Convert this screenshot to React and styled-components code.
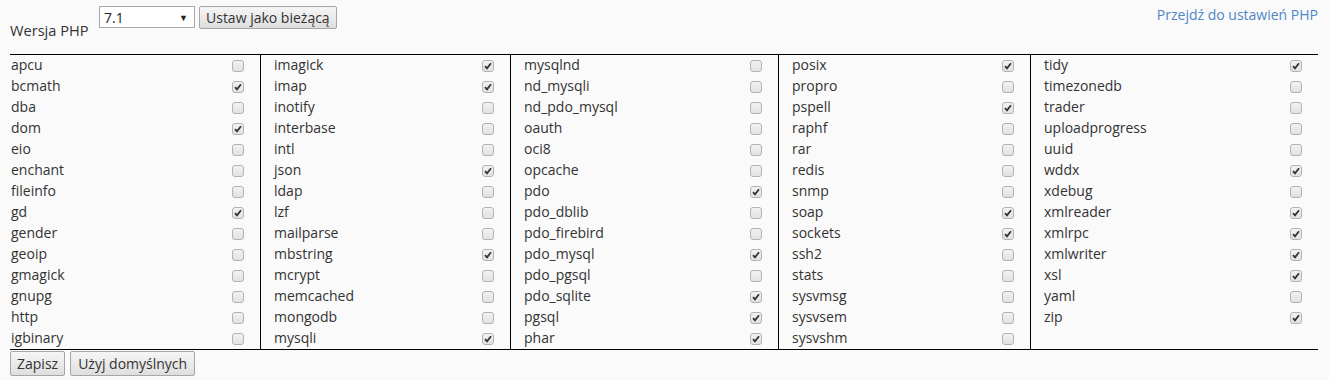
import React from "react";
import styled, { createGlobalStyle } from "styled-components";

const Global = createGlobalStyle`
  html, body { margin: 0; padding: 0; background: #fafafa; }
  body { font-family: "Open Sans", "Liberation Sans", sans-serif; font-size: 14px; color: #333; }
`;

const Page = styled.div`
  padding: 6px 11px 0 10px;
`;

const TopBar = styled.div`
  display: flex;
  align-items: flex-start;
  height: 48px;
`;

const Label = styled.span`
  margin-top: 14px;
  line-height: 20px;
  width: 89px;
  font-size: 14.6px;
  color: #333;
`;

const SelectBox = styled.div`
  box-sizing: border-box;
  width: 96px;
  height: 22px;
  border: 1px solid #a9a9a9;
  background: #fff;
  display: flex;
  align-items: center;
  justify-content: space-between;
  padding: 0 6px 0 4px;
  font-size: 14px;
  color: #222;
`;

const Arrow = styled.span`
  font-size: 9px;
  color: #222;
`;

const Button = styled.button`
  box-sizing: border-box;
  height: ${(p) => p.$h || 23}px;
  padding: 0 ${(p) => p.$px || 6}px;
  margin-left: ${(p) => p.$ml || 0}px;
  font-family: "Open Sans", "Liberation Sans", sans-serif;
  font-size: 14px;
  color: #333;
  border: 1px solid #a6a6a6;
  border-radius: 2px;
  background: linear-gradient(#f6f6f6, #dedede);
  line-height: 1;
`;

const Link = styled.a`
  margin-left: auto;
  color: #4f86c6;
  text-decoration: none;
  line-height: 20px;
  margin-top: -1px;
`;

const Table = styled.div`
  display: grid;
  grid-template-columns: 250px 250px 268px 252px 288px;
  border-top: 1px solid #000;
  border-bottom: 1px solid #000;
  width: 1308px;
`;

const Column = styled.div`
  display: flex;
  flex-direction: column;
  border-left: ${(p) => (p.$first ? "none" : "1px solid #000")};
  padding-left: ${(p) => (p.$first ? 1 : 13)}px;
  padding-right: 16px;
`;

const Row = styled.div`
  height: 21px;
  display: flex;
  align-items: center;
  justify-content: space-between;
`;

const Name = styled.span`
  color: #333;
  line-height: 19px;
  padding-bottom: 2px;
`;

const Box = styled.span`
  box-sizing: border-box;
  width: 12px;
  height: 12px;
  border: 1px solid #b3b3b3;
  border-radius: 3px;
  background: linear-gradient(#f2f2f2, #e2e2e2);
  display: flex;
  align-items: center;
  justify-content: center;
`;

const Footer = styled.div`
  display: flex;
  gap: 5px;
  padding-top: 1px;
`;

const Check = () => (
  <svg width="8" height="8" viewBox="0 0 8 8">
    <path d="M1 4.2 L3 6.3 L7 1.2" fill="none" stroke="#333" strokeWidth="1.8" />
  </svg>
);

const columns = [
  [["apcu",0],["bcmath",1],["dba",0],["dom",1],["eio",0],["enchant",0],["fileinfo",0],["gd",1],["gender",0],["geoip",0],["gmagick",0],["gnupg",0],["http",0],["igbinary",0]],
  [["imagick",1],["imap",1],["inotify",0],["interbase",0],["intl",0],["json",1],["ldap",0],["lzf",0],["mailparse",0],["mbstring",1],["mcrypt",0],["memcached",0],["mongodb",0],["mysqli",1]],
  [["mysqlnd",0],["nd_mysqli",0],["nd_pdo_mysql",0],["oauth",0],["oci8",0],["opcache",0],["pdo",1],["pdo_dblib",0],["pdo_firebird",0],["pdo_mysql",1],["pdo_pgsql",0],["pdo_sqlite",1],["pgsql",1],["phar",1]],
  [["posix",1],["propro",0],["pspell",1],["raphf",0],["rar",0],["redis",0],["snmp",0],["soap",1],["sockets",1],["ssh2",0],["stats",0],["sysvmsg",0],["sysvsem",0],["sysvshm",0]],
  [["tidy",1],["timezonedb",0],["trader",0],["uploadprogress",0],["uuid",0],["wddx",1],["xdebug",0],["xmlreader",1],["xmlrpc",1],["xmlwriter",1],["xsl",1],["yaml",0],["zip",1]],
];

export default function App() {
  return (
    <Page>
      <Global />
      <TopBar>
        <Label>Wersja PHP</Label>
        <SelectBox>
          <span>7.1</span>
          <Arrow>▼</Arrow>
        </SelectBox>
        <Button $ml={4}>Ustaw jako bieżącą</Button>
        <Link href="#">Przejdź do ustawień PHP</Link>
      </TopBar>
      <Table>
        {columns.map((col, i) => (
          <Column key={i} $first={i === 0}>
            {col.map(([n, c]) => (
              <Row key={n}>
                <Name>{n}</Name>
                <Box>{c ? <Check /> : null}</Box>
              </Row>
            ))}
          </Column>
        ))}
      </Table>
      <Footer>
        <Button $h={25}>Zapisz</Button>
        <Button $h={25} $px={7}>Użyj domyślnych</Button>
      </Footer>
    </Page>
  );
}
